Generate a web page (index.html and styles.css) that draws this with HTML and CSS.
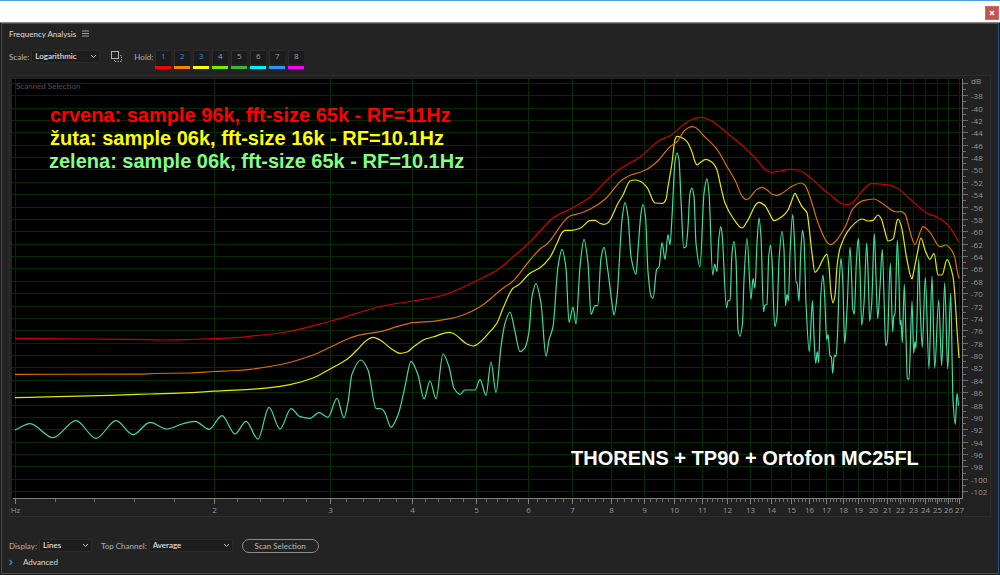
FILE: index.html
```html
<!DOCTYPE html>
<html lang="en">
<head>
<meta charset="utf-8">
<title>Frequency Analysis</title>
<link rel="stylesheet" href="styles.css">
</head>
<body>
<div class="window">
  <header class="titlebar">
    <button class="close" type="button" aria-label="Close">
      <svg width="6" height="6" viewBox="0 0 6 6"><path d="M1 1L5 5M5 1L1 5" stroke="#fff" stroke-width="1.5"/></svg>
    </button>
  </header>
  <main class="panel">
    <div class="heading">
      <h1 class="title">Frequency Analysis</h1>
      <button class="icon-button" type="button" aria-label="Panel menu">
        <svg width="7" height="7" viewBox="0 0 7 7"><path d="M0 1H7M0 3.5H7M0 6H7" stroke="#a0a0a0" stroke-width="1"/></svg>
      </button>
    </div>
    <div class="toolbar">
      <label class="label" for="scale">Scale:</label>
      <span class="picker picker-scale">
        <select id="scale"><option>Logarithmic</option><option>Linear</option></select>
        <svg class="chevron" viewBox="0 0 7 5"><path d="M1 1L3.5 3.5L6 1"/></svg>
      </span>
      <button class="icon-button copy" type="button" aria-label="Copy">
        <svg width="11" height="11" viewBox="0 0 11 11" fill="none"><rect x="0.5" y="0.5" width="7" height="7" stroke="#b5b5b5"/><path d="M9 4.5H10.5V10.5H3.5V9" stroke="#909090" stroke-dasharray="1.5 1"/></svg>
      </button>
      <span class="label">Hold:</span>
      <div class="holds">
        <button class="hold red on" type="button" aria-pressed="true">1</button>
        <button class="hold orange on" type="button" aria-pressed="true">2</button>
        <button class="hold yellow on" type="button" aria-pressed="true">3</button>
        <button class="hold lime" type="button" aria-pressed="false">4</button>
        <button class="hold green" type="button" aria-pressed="false">5</button>
        <button class="hold cyan" type="button" aria-pressed="false">6</button>
        <button class="hold blue" type="button" aria-pressed="false">7</button>
        <button class="hold magenta" type="button" aria-pressed="false">8</button>
      </div>
    </div>
    <svg class="chart" id="chart" viewBox="9 75 982 442" role="img" aria-label="Frequency spectrum">
      <rect class="frame" x="9.5" y="75.5" width="981" height="441"/>
      <rect class="plot" x="12" y="79" width="950" height="419"/>
      <g id="grid"></g>
      <text class="scan" x="16" y="89">Scanned Selection</text>
      <g id="curves"></g>
      <g id="axes"></g>
      <text class="note note-red" x="50" y="122">crvena: sample 96k, fft-size 65k - RF=11Hz</text>
      <text class="note note-yellow" x="50" y="145">žuta: sample 06k, fft-size 16k - RF=10.1Hz</text>
      <text class="note note-green" x="49" y="168">zelena: sample 06k, fft-size 65k - RF=10.1Hz</text>
      <text class="note note-white" x="571" y="465">THORENS + TP90 + Ortofon MC25FL</text>
    </svg>
    <div class="options">
      <label class="label" for="display">Display:</label>
      <span class="picker picker-display">
        <select id="display"><option>Lines</option><option>Area</option><option>Bars</option></select>
        <svg class="chevron" viewBox="0 0 7 5"><path d="M1 1L3.5 3.5L6 1"/></svg>
      </span>
      <label class="label channel" for="channel">Top Channel:</label>
      <span class="picker picker-channel">
        <select id="channel"><option>Average</option><option>Left</option><option>Right</option></select>
        <svg class="chevron" viewBox="0 0 7 5"><path d="M1 1L3.5 3.5L6 1"/></svg>
      </span>
      <button class="scan-button" type="button">Scan Selection</button>
    </div>
    <button class="advanced" type="button" aria-expanded="false">
      <svg width="4" height="7" viewBox="0 0 4 7" fill="none"><path d="M0.5 1L3 3.5L0.5 6" stroke="#2d8ceb" stroke-width="1.2"/></svg>
      <span>Advanced</span>
    </button>
  </main>
</div>
<script src="chart.js"></script>
</body>
</html>
```
FILE: styles.css
```css
* { box-sizing: border-box; }

body {
  margin: 0;
  background: #1b1b1b;
  font-family: Lato, "Open Sans", sans-serif;
  font-size: 8px;
  font-weight: 500;
  line-height: 12px;
  color: #a8a8a8;
}

button, select {
  margin: 0;
  padding: 0;
  border: 0;
  background: none;
  color: inherit;
  font: inherit;
}

svg { display: block; }

.window {
  display: flex;
  flex-direction: column;
  min-height: 100vh;
  padding-bottom: 1px;
}

.titlebar {
  display: flex;
  justify-content: flex-end;
  align-items: center;
  height: 23px;
  padding: 2px 1px 0 0;
  background: #fff;
  border-top: 1px solid #4f9fe0;
  border-bottom: 1px solid #8a8580;
}

.close {
  display: flex;
  align-items: center;
  justify-content: center;
  width: 14px;
  height: 14px;
  background: #c75050;
  border: 1px solid #d46a6a;
}

.panel {
  flex: 1;
  margin: 0 1px;
  padding: 3px 7px 4px;
  background: #232323;
  border: 1px solid #265583;
}

.heading {
  display: flex;
  align-items: center;
  gap: 6px;
  height: 13px;
}

.title {
  margin: 0;
  font-size: 8px;
  font-weight: 500;
  color: #d4d4d4;
}

.toolbar {
  display: flex;
  align-items: center;
  height: 25px;
  margin: 4px 0 6px;
}

.picker {
  position: relative;
  display: flex;
  height: 13px;
  margin-left: 2px;
  background: #1d1d1d;
  border: 1px solid #2b2b2b;
  border-radius: 2px;
  color: #e6e6e6;
}

.picker select {
  appearance: none;
  width: 100%;
  padding-left: 3px;
  line-height: 11px;
}

.picker-scale { width: 69px; }
.picker-display { width: 53px; }
.picker-channel { width: 84px; }

.chevron {
  position: absolute;
  right: 2px;
  top: 3px;
  width: 7px;
  height: 5px;
  fill: none;
  stroke: #c0c0c0;
  pointer-events: none;
}

.copy { margin: 0 12px 0 11px; }

.holds {
  display: flex;
  gap: 3px;
  margin: 5px 0 0 2px;
}

.hold {
  width: 16px;
  height: 19px;
  padding-bottom: 3px;
  background: linear-gradient(#1b1b1b, #1b1b1b) 0 0 / 100% 14px no-repeat;
  border-bottom: 3px solid;
  box-shadow: inset 0 1px #2c2c2c, inset 1px 0 #2c2c2c;
  font-family: "Open Sans", sans-serif;
  line-height: 12px;
  -webkit-text-fill-color: #a0a0a0;
}

.hold.on { -webkit-text-fill-color: #2d8ceb; background-color: #191919; }

.red { border-color: #ff0000; }
.orange { border-color: #ff8000; }
.yellow { border-color: #ffff00; }
.lime { border-color: #70f000; }
.green { border-color: #3db83d; }
.cyan { border-color: #00f0ff; }
.blue { border-color: #2896ff; }
.magenta { border-color: #ff00ff; }

.chart { width: 100%; height: auto; }
.frame { fill: #212121; stroke: #2d2d2d; }
.plot { fill: #000; }
.grid-line { stroke: #002c00; shape-rendering: crispEdges; }
.axis { stroke: #808080; shape-rendering: crispEdges; fill: none; }
.tick { stroke: #6c6c6c; shape-rendering: crispEdges; }
.axis-label {
  fill: #969696;
  font-family: "Open Sans", sans-serif;
  font-size: 8px;
}
.centered { text-anchor: middle; }
.scan { fill: #4c4c4c; font-size: 8px; }

.curve { fill: none; stroke-width: 1.2; stroke-linejoin: round; }
.curve-red { stroke: #d00000; }
.curve-orange { stroke: #dc6e00; }
.curve-yellow { stroke: #e8e800; }
.curve-green { stroke: #42dc9c; }

.note {
  font-family: "Liberation Sans", Arial, sans-serif;
  font-size: 20px;
  font-weight: 700;
}
.note-red { fill: #ff0000; }
.note-yellow { fill: #ffff00; }
.note-green { fill: #80ff80; }
.note-white { fill: #fff; }

.options {
  display: flex;
  align-items: center;
  height: 15px;
  margin-top: 21px;
}

.channel { margin-left: 9px; }

.scan-button {
  width: 77px;
  height: 14px;
  margin-left: 9px;
  border: 1px solid #8c8c8c;
  border-radius: 7px;
  color: #b0b0b0;
  line-height: 12px;
}

.advanced {
  display: flex;
  align-items: center;
  gap: 10px;
  margin-top: 3px;
  color: #d0d0d0;
}
```
FILE: chart.js
```js
const NS = "http://www.w3.org/2000/svg";
const LEFT = 12, RIGHT = 962, TOP = 79, BOTTOM = 498;

const freqX = f => 15.5 + 286.4 * Math.log(f);
const levelY = db => 83.3 + (-36 - db) * 6.1875;

function add(parent, tag, attrs, text) {
  const el = document.createElementNS(NS, tag);
  for (const k in attrs) el.setAttribute(k, attrs[k]);
  if (text !== undefined) el.textContent = text;
  document.getElementById(parent).appendChild(el);
}

function line(parent, cls, x1, y1, x2, y2) {
  add(parent, "line", { class: cls, x1, y1, x2, y2 });
}

const mid = v => Math.floor(v) + 0.5;

for (let f = 1; f <= 27; f++) {
  const x = mid(freqX(f));
  line("grid", "grid-line", x, TOP, x, BOTTOM);
  line("axes", "axis", x, BOTTOM, x, BOTTOM + 6);
  add("axes", "text", { class: "axis-label centered", x, y: 513 }, f === 1 ? "Hz" : f);
  if (f < 27) {
    const step = (freqX(f + 1) - freqX(f)) / 5;
    for (let i = 1; i < 5; i++) {
      const t = mid(freqX(f) + step * i);
      line("axes", "tick", t, BOTTOM, t, BOTTOM + 4);
    }
  }
}

for (let db = -36; db >= -102; db--) {
  const y = mid(levelY(db));
  if (db % 2 === 0) {
    line("grid", "grid-line", LEFT, y, RIGHT, y);
    line("axes", "tick", RIGHT, y, RIGHT + 6, y);
    if (db < -36) add("axes", "text", { class: "axis-label", x: 971, y: y + 3 }, db);
  } else {
    line("axes", "tick", RIGHT, y, RIGHT + 4, y);
  }
}
add("axes", "text", { class: "axis-label", x: 971, y: TOP + 5 }, "dB");
add("axes", "path", { class: "axis", d: `M${LEFT + 1} ${BOTTOM + 0.5}H${RIGHT + 0.5}V${TOP}` });

const curves = {
  red: "15,338.3 40,338.5 90,339 150,339.7 165,340 190,339.5 214,338.7 235,337.7 250,336.3 283,332.5 331,321 385,305.5 413,301 440,296 480,279 497,270 513,257 530,242 554,217.3 572,208.3 590,197 607,180 620,169 640,157 660,140 670,135.7 683,125 693,119 701,117.3 710,120 727,133 743,146 757,160 767,170.7 772,172.3 780,171 790,169.3 798,170 807,175 823,189 833,197 843,204 848,204.7 853,202 863,190 871,183.7 887,184.7 897,188 910,199 928,213.7 937,217 948,225 959,242.3",
  orange: "15,374.3 138,374.2 155,373.5 190,373 214,371.5 235,370.5 250,369.3 283,364 313,355 330,347.3 347,339.3 358,335.3 380,331.7 397,326.7 413,322.7 433,321.3 450,318.7 463,315 480,306.7 503,288.3 513,281 530,260 540,249 547,244 570,216 580,213.3 590,209.3 605,199.3 622,180 632,174.5 640,172.3 647,169.3 657,161.7 670,146.7 677,141.7 685,130 692,126.7 695,127.3 703,135 717,149.3 728,168.3 735,180 742,196 746,199.7 748,199 757,189.3 762,187.3 767,190 773,194.7 777,195.3 782,193.3 792,186.3 801,183 805,185.3 810,197 818,222.7 828,243.3 831,244.7 835,242 845,227.3 853,208.7 863,200.7 874,199 882,203.3 897,212 901,211.3 905,214 908,223.3 912,238.3 915,244.7 917,240.7 921,230 923,226.7 930,232.3 940,246.7 946,245 952,251 955,258.3 957,270 959,278.3",
  yellow: "15,397.7 57,396.7 110,395.3 150,394 190,392.7 214,391.2 250,389.3 270,387.7 290,384.7 313,378 330,369 347,359.3 357,350 367,340 373,337.3 380,340 392,349.3 400,353.3 407,352 413,347.3 425,339.3 433,337 449,332.3 453,333.3 467,344 473,346 478,343.7 490,331.7 497,323 503,308.3 513,288.3 518,285.3 530,273.3 540,267.7 550,257.3 557,243.3 562,232.7 565,230.3 572,230.3 580,228.3 590,220.7 595,220.3 600,223.3 604,224.3 608,222.7 618,203.3 623,195 630,181 635,180 640,181.3 647,187.3 655,203 663,203.3 666,199.3 668,186.7 671.7,165 675,140 677,136.3 682,137.7 687,141.7 692,152 695,161.7 697,165 700,162.7 706,159.3 712,162.3 717,170 720,183 725,203 733,218 742,228 747,221.7 757,203.3 759,202.3 765,205.7 772,218.3 774,220.7 783,215.7 788,210 792,200 795,193.3 797,196.7 802,206.7 807,212.7 809,226.7 812,253.3 815,272.3 827,254.3 829,266.7 831,293.3 833,303 835,295 837,266.7 840,248.3 850,228.3 862,219 868,221 873,220.3 878,215 881,218.3 885,231.7 888,241 893,239 897,220.7 898,219 901,225 907,260 912,279 913,275 917,255 921,238 925,250 930,259.3 934,253.3 938,275 942,275 947,259.7 953,276.7 955,297 957,330 959,358",
  green: "15,430 30,423.7 53,437.7 76,420.7 96,438.3 116,420.7 133,434.7 150,422.3 167,429 182,424 195,421.3 209,429.3 222,415.7 235,434 246,421.3 258,439 269,407.3 280,429 291,408.7 300,416.7 310,418.3 319,412.7 328,417.3 337,398.3 344,418 348,402 352,374 361,360 368,370 376,408.3 382,409 385,413 391,427.3 398,415 405,386.7 411,361.3 418,375 424,399 430,381 436,398.7 443,354 449,366.7 454,388.3 460,394.3 465,390 475,390 480,379.7 486,395.3 491,362 496,392.3 501,346.7 505,323.3 510,312 515,331.7 520,351.7 525,347.7 529,331.7 532,296.7 536,283.7 541,303.3 546,356.3 549,340 553,326.7 558,266.7 562,249.3 566,268.3 569,322.3 573,307 576,324 580,266.7 584,239.3 588,263.3 591,314.3 595,305.7 597.7,305.7 601,258.3 604,247.3 608,271.7 612,303.3 614,315 617,296.7 622,220 625,202.3 628,216.7 631,256.7 636,274.3 638,250 641,213.3 643,204.5 645.5,216.7 648,271.7 651,296 653,298.5 656.7,269.3 659,267 662,242.7 665,259.3 668,234.7 670,244.7 672,216.7 675,161.7 677,153 679,160 681,200 683.7,248 686,246.7 688,226.7 690,193.3 692,188 694,196.7 696,243.3 700,267 704,193.3 707,178.7 709,193.3 712.7,275 714.7,264 717,271.7 718.7,240 720.7,226.7 722,233.3 726.5,307.7 728,301 730,300 732,253.3 734,241.3 736,260 738,330 740,336.3 742.5,323.3 744,280 747,238.3 751,299.3 753,278.7 755,288.3 757,243 759,218 761,237 763.5,311.7 765,305 767,304.5 768.7,256.7 770.5,245 772,260 774.7,326.7 777,316.7 779,260 782,231.3 784,250 785.5,305.7 787,294.3 788.5,300.7 790,253 792.7,214.7 794.7,246.7 796,282.7 797,282.7 799,301.3 800.7,253.3 802.5,230.3 804,240 806,303.3 809.3,351.7 812.5,300.7 814,336.7 815.7,363.3 817.3,351.7 818.7,362.7 820.7,296.7 823,275 824.7,296.7 826.7,340 828,334 830,356 831.3,356.7 832.7,373.3 834.3,355 836,356.7 837.7,330 839.3,280 841,258.3 842.7,280 844.7,343.7 847,310 850,247.3 851.7,280 852.7,308.3 854.3,314.3 856.3,263.3 858.3,238.3 860,270 861.7,325.3 864,303.3 866.7,243 868.3,280 869.7,321 871.7,303 874.3,233.7 876,276.7 877.7,318.7 880,286.7 882.3,249.3 884,296.7 885.7,345.7 887.3,341.7 890.3,263.3 892.7,332 893.7,316.7 895,313.3 897.3,240 899,280 900,325 901,320 902.3,342.7 904.3,284.3 906,336.7 907.3,378.3 909,379.3 912,301.3 913.7,353 915,341.7 916,348.3 918.7,259 920.3,310 922.3,347.3 925.3,277.3 929,368.7 932,276 934.7,368.3 938.7,300 941.7,366 944.7,282.7 947.7,369 950.7,293.3 952.3,370 953,400 955.3,424.3 957,393.3 958.5,405.7"
};

// Monotone cubic interpolation keeps peaks rounded without overshoot.
function smooth(points) {
  const n = points.length;
  const slope = [];
  for (let i = 0; i < n - 1; i++) {
    slope.push((points[i + 1][1] - points[i][1]) / (points[i + 1][0] - points[i][0]));
  }
  const tangent = points.map((p, i) => {
    if (i === 0) return slope[0];
    if (i === n - 1) return slope[n - 2];
    const a = slope[i - 1], b = slope[i];
    return a * b <= 0 ? 0 : 2 * a * b / (a + b);
  });
  let d = `M${points[0]}`;
  for (let i = 0; i < n - 1; i++) {
    const [x0, y0] = points[i], [x1, y1] = points[i + 1];
    const h = (x1 - x0) / 3;
    d += `C${x0 + h} ${y0 + h * tangent[i]} ${x1 - h} ${y1 - h * tangent[i + 1]} ${x1} ${y1}`;
  }
  return d;
}

for (const name of ["green", "yellow", "orange", "red"]) {
  const points = curves[name].split(" ").map(p => p.split(",").map(Number));
  add("curves", "path", { class: `curve curve-${name}`, d: smooth(points) });
}
```
